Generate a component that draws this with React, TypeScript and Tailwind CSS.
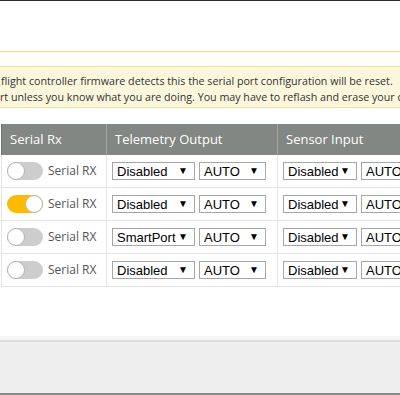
import React from "react"

type Row = { on: boolean; telemetry: string }

const rows: Row[] = [
    { on: false, telemetry: "Disabled" },
    { on: true, telemetry: "Disabled" },
    { on: false, telemetry: "SmartPort" },
    { on: false, telemetry: "Disabled" },
]

const Toggle = ({ on }: { on: boolean }) => (
    <div className={`flex h-[18px] w-[36px] shrink-0 items-center rounded-full ${on ? "justify-end bg-[#ffbb00]" : "justify-start bg-[#cdcdcd]"}`}>
        <div className="h-[18px] w-[18px] rounded-full border border-[#b5b5b5] bg-white" />
    </div>
)

// fake select box, native ones render differently in every browser
const Select = ({ value, width }: { value: string; width: string }) => (
    <div className={`flex h-[18px] shrink-0 items-center justify-between border border-[#a6a6a6] bg-white pl-[4px] pr-[6px] font-['Liberation_Sans'] text-[13px] leading-none text-black ${width}`}>
        <span className="whitespace-nowrap">{value}</span>
        <span className="text-[10px]">▼</span>
    </div>
)

const App = () => {
    return (
        <div className="flex h-[395px] w-[400px] flex-col overflow-hidden bg-white font-['Open_Sans']">
            <div className="h-[1px] shrink-0 bg-[#2a2a2a]" />
            <div className="h-[50px] shrink-0" />

            {/* warning note */}
            <div className="shrink-0 border-t border-[#e6da8e] bg-[#fffefa] pt-[14px]">
                <div className="border-y border-[#ebe09e] bg-[#fcf7dc] pb-[2px] pt-[6px] text-[10.7px] leading-[16px] text-[#333]">
                    <div className="flex whitespace-nowrap pl-[1px]">
                        <div className="flex w-0 justify-end">
                            <span>Note: not all combinations are valid. When the&nbsp;</span>
                        </div>
                        <span>flight controller firmware detects this the serial port configuration will be reset.</span>
                    </div>
                    <div className="flex whitespace-nowrap">
                        <div className="flex w-0 justify-end">
                            <span>Note: Do NOT disable MSP on the first serial po</span>
                        </div>
                        <span>rt unless you know what you are doing. You may have to reflash and erase your configuration if you do.</span>
                    </div>
                </div>
            </div>

            <div className="h-[16px] shrink-0" />

            {/* ports table */}
            <div className="shrink-0 pl-[1px]">
                <div className="grid h-[31px] grid-cols-[105px_171px_1fr] bg-[#828783] text-[13px] text-white">
                    <div className="flex items-center border-l border-[#6f7470] pl-[8px]">Serial Rx</div>
                    <div className="flex items-center border-l border-[#a3a7a4] pl-[8px]">Telemetry Output</div>
                    <div className="flex items-center border-l border-[#a3a7a4] pl-[8px] whitespace-nowrap">Sensor Input</div>
                </div>
                {rows.map((r, i) => (
                    <div key={i} className="grid h-[33px] grid-cols-[105px_171px_1fr] border-b border-[#e4e4e4]">
                        <div className="flex items-center gap-[5px] border-l border-[#e4e4e4] pl-[5px]">
                            <Toggle on={r.on} />
                            <span className="whitespace-nowrap text-[12px] text-[#555]">Serial RX</span>
                        </div>
                        <div className="flex items-center gap-[4px] border-l border-[#e4e4e4] pl-[5px]">
                            <Select value={r.telemetry} width="w-[83px]" />
                            <Select value="AUTO" width="w-[67px]" />
                        </div>
                        <div className="flex items-center gap-[4px] border-l border-[#e4e4e4] pl-[5px]">
                            <Select value="Disabled" width="w-[74px]" />
                            <Select value="AUTO" width="w-[67px]" />
                        </div>
                    </div>
                ))}
            </div>

            <div className="flex-1" />

            {/* bottom toolbar */}
            <div className="h-[4px] shrink-0 bg-[#f6f6f6]" />
            <div className="h-[2px] shrink-0 bg-[#dedede]" />
            <div className="h-[51px] shrink-0 bg-[#eeeeee]" />
            <div className="h-[2px] shrink-0 bg-[#8a8a86]" />
        </div>
    )
}

export default App
